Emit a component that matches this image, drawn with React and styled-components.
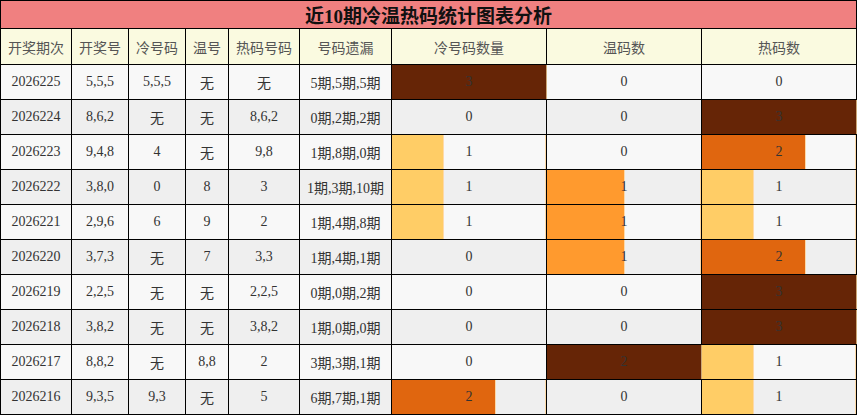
import React from "react";
import styled, { createGlobalStyle } from "styled-components";

const GlobalStyle = createGlobalStyle`
  html, body {
    margin: 0;
    padding: 0;
    background: #ffffff;
  }
`;

const rows = [
  ["2026225", "5,5,5", "5,5,5", "无", "无", "5期,5期,5期", 3, 0, 0],
  ["2026224", "8,6,2", "无", "无", "8,6,2", "0期,2期,2期", 0, 0, 3],
  ["2026223", "9,4,8", "4", "无", "9,8", "1期,8期,0期", 1, 0, 2],
  ["2026222", "3,8,0", "0", "8", "3", "1期,3期,10期", 1, 1, 1],
  ["2026221", "2,9,6", "6", "9", "2", "1期,4期,8期", 1, 1, 1],
  ["2026220", "3,7,3", "无", "7", "3,3", "1期,4期,1期", 0, 1, 2],
  ["2026219", "2,2,5", "无", "无", "2,2,5", "0期,0期,2期", 0, 0, 3],
  ["2026218", "3,8,2", "无", "无", "3,8,2", "1期,0期,0期", 0, 0, 3],
  ["2026217", "8,8,2", "无", "8,8", "2", "3期,3期,1期", 0, 2, 1],
  ["2026216", "9,3,5", "9,3", "无", "5", "6期,7期,1期", 2, 0, 1],
];

const headers = ["开奖期次", "开奖号", "冷号码", "温号", "热码号码", "号码遗漏", "冷号码数量", "温码数", "热码数"];

// max value per bar column: cold, warm, hot
const maxes = [3, 2, 3];

const barColor = (ratio) => {
  if (ratio >= 0.99) return "#662506";
  if (ratio > 0.6) return "#e0660f";
  if (ratio > 0.4) return "#ff9a2e";
  return "#ffcd66";
};

const Table = styled.div`
  display: grid;
  grid-template-columns: 70px 56px 56px 42px 70px 91px 154px 154px 154px;
  grid-auto-rows: 34px;
  grid-template-rows: 27px 35px;
  gap: 1px;
  padding: 1px;
  background: #000;
  width: 855px;
`;

const Title = styled.div`
  grid-column: 1 / -1;
  background: #f08080;
  display: flex;
  align-items: center;
  justify-content: center;
  font-family: "Liberation Serif", "Noto Sans CJK SC", serif;
  font-weight: bold;
  font-size: 19px;
  color: #111;
`;

const Head = styled.div`
  background: #fafae0;
  display: flex;
  align-items: center;
  justify-content: center;
  font-family: "Noto Sans CJK SC", sans-serif;
  font-size: 14px;
  color: #555;
`;

const Cell = styled.div`
  position: relative;
  background: ${(p) => (p.$odd ? "#efefef" : "#f8f8f8")};
  display: flex;
  align-items: center;
  justify-content: center;
  font-family: "Liberation Serif", "Noto Sans CJK SC", serif;
  font-size: 14px;
  color: #333;
  box-shadow: ${(p) => (p.$edge ? "inset -1px 0 0 #fcd9a8" : "none")};
`;

const Bar = styled.div`
  position: absolute;
  left: 0;
  top: 0;
  bottom: 0;
  box-shadow: 1px 0 0 rgba(255, 210, 150, 0.8);
`;

const Value = styled.span`
  position: relative;
`;

export default function App() {
  return (
    <>
      <GlobalStyle />
      <Table>
        <Title>近10期冷温热码统计图表分析</Title>
        {headers.map((h) => (
          <Head key={h}>{h}</Head>
        ))}
        {rows.map((r, i) => (
          <React.Fragment key={r[0]}>
            {r.slice(0, 6).map((t, j) => (
              <Cell key={j} $odd={i % 2 === 1}>
                {t}
              </Cell>
            ))}
            {r.slice(6).map((v, j) => {
              const ratio = v / maxes[j];
              return (
                <Cell key={"b" + j} $odd={i % 2 === 1} $edge={v > 0 && ratio < 1}>
                  {v > 0 && (
                    <Bar style={{ width: `${ratio * 100}%`, background: barColor(ratio) }} />
                  )}
                  <Value>{v}</Value>
                </Cell>
              );
            })}
          </React.Fragment>
        ))}
      </Table>
    </>
  );
}
